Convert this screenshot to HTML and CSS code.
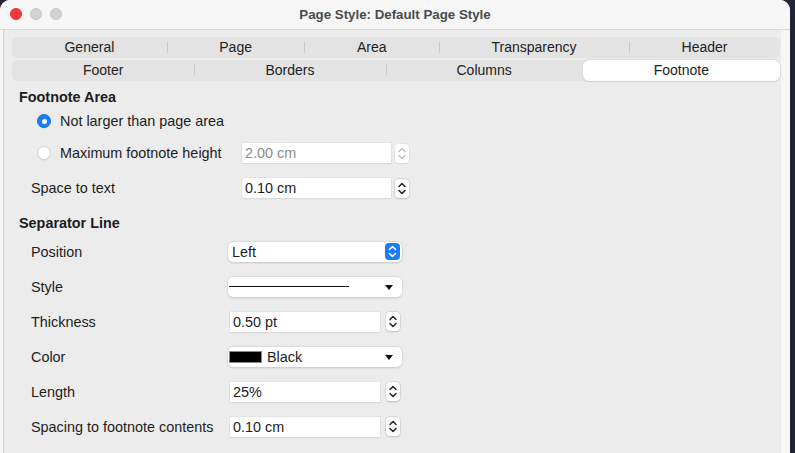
FILE: index.html
```html
<!DOCTYPE html>
<html>
<head>
<meta charset="utf-8">
<link rel="stylesheet" href="styles.css">
</head>
<body>
<div class="window">
  <div class="titlebar">
    <div class="lights">
      <span class="light red"></span>
      <span class="light gray"></span>
      <span class="light gray"></span>
    </div>
    <div class="title">Page Style: Default Page Style</div>
  </div>
  <div class="frame">
    <div class="panel">
      <div class="tabrow">
        <div class="tab">General</div>
        <div class="tab">Page</div>
        <div class="tab">Area</div>
        <div class="tab">Transparency</div>
        <div class="tab">Header</div>
      </div>
      <div class="tabrow row2">
        <div class="tab">Footer</div>
        <div class="tab">Borders</div>
        <div class="tab">Columns</div>
        <div class="tab active">Footnote</div>
      </div>

      <div class="heading h1">Footnote Area</div>
      <div class="row radio-row r1">
        <span class="radio on"></span><span class="rlabel">Not larger than page area</span>
      </div>
      <div class="row radio-row r2">
        <span class="radio"></span><span class="rlabel wide">Maximum footnote height</span>
        <div class="field f1 disabled">2.00 cm</div>
        <span class="spin disabled"><svg viewBox="0 0 14 19" width="14" height="19"><path d="M4 7.5 L7 4.5 L10 7.5" /><path d="M4 11.5 L7 14.5 L10 11.5" /></svg></span>
      </div>
      <div class="row r3">
        <span class="label l1">Space to text</span>
        <div class="field f1">0.10 cm</div>
        <span class="spin"><svg viewBox="0 0 14 19" width="14" height="19"><path d="M4 7.5 L7 4.5 L10 7.5" /><path d="M4 11.5 L7 14.5 L10 11.5" /></svg></span>
      </div>

      <div class="heading h2">Separator Line</div>
      <div class="row srow">
        <span class="label l2">Position</span>
        <div class="select">Left<span class="stepper"><svg viewBox="0 0 15 17" width="15" height="17"><path d="M4.5 6.5 L7.5 3.5 L10.5 6.5" /><path d="M4.5 10.5 L7.5 13.5 L10.5 10.5" /></svg></span></div>
      </div>
      <div class="row srow">
        <span class="label l2">Style</span>
        <div class="select"><span class="sline"></span><span class="tri"></span></div>
      </div>
      <div class="row srow">
        <span class="label l2">Thickness</span>
        <div class="field f2">0.50 pt</div>
        <span class="spin s2"><svg viewBox="0 0 14 19" width="14" height="19"><path d="M4 7.5 L7 4.5 L10 7.5" /><path d="M4 11.5 L7 14.5 L10 11.5" /></svg></span>
      </div>
      <div class="row srow">
        <span class="label l2">Color</span>
        <div class="select"><span class="swatch"></span>Black<span class="tri"></span></div>
      </div>
      <div class="row srow">
        <span class="label l2">Length</span>
        <div class="field f2">25%</div>
        <span class="spin s2"><svg viewBox="0 0 14 19" width="14" height="19"><path d="M4 7.5 L7 4.5 L10 7.5" /><path d="M4 11.5 L7 14.5 L10 11.5" /></svg></span>
      </div>
      <div class="row srow">
        <span class="label l2">Spacing to footnote contents</span>
        <div class="field f2">0.10 cm</div>
        <span class="spin s2"><svg viewBox="0 0 14 19" width="14" height="19"><path d="M4 7.5 L7 4.5 L10 7.5" /><path d="M4 11.5 L7 14.5 L10 11.5" /></svg></span>
      </div>
    </div>
  </div>
</div>
</body>
</html>
```

FILE: styles.css
```css
* { box-sizing: border-box; }
html, body { margin: 0; padding: 0; }
body {
  width: 795px;
  height: 453px;
  overflow: hidden;
  background: #1f2631;
  font-family: "Liberation Sans", Arial, sans-serif;
  font-size: 14.4px;
  color: #1c1c1c;
}
.window {
  width: 790px;
  height: 453px;
  background: #f6f6f6;
  border-radius: 10px 10px 0 0;
  overflow: hidden;
  display: flex;
  flex-direction: column;
}
.titlebar {
  height: 30px;
  flex: none;
  border-bottom: 1px solid #d9d9d9;
  display: flex;
  align-items: center;
  position: relative;
  background: #f6f6f6;
}
.lights {
  display: flex;
  gap: 8px;
  padding-left: 10px;
  padding-bottom: 1px;
}
.light {
  width: 12px;
  height: 12px;
  border-radius: 50%;
  display: block;
}
.light.red { background: #f03a3e; border: 1px solid #e0302f; }
.light.gray { background: #d3d3d3; border: 1px solid #c6c6c6; }
.title {
  position: absolute;
  left: 0; right: 0; top: 0;
  height: 29px;
  line-height: 29px;
  text-align: center;
  font-weight: bold;
  font-size: 13.3px;
  color: #4b4b4b;
}
.frame {
  flex: 1;
  padding: 0 9px 0 3px;
  display: flex;
}
.panel {
  flex: 1;
  background: #ececec;
  border-left: 1px solid #d2d2d2;
  padding: 7px 1px 0 8px;
}
.tabrow {
  display: flex;
  height: 21px;
  background: #e3e3e3;
  border-radius: 6px;
  align-items: center;
  font-size: 14px;
}
.tabrow.row2 { margin-top: 2px; }
.tab {
  flex: 1 1 auto;
  text-align: center;
  height: 21px;
  line-height: 21px;
  color: #222;
  position: relative;
}
.tab + .tab::before {
  content: "";
  position: absolute;
  left: 0;
  top: 5px;
  height: 11px;
  width: 1px;
  background: #cacaca;
}
.tab.active {
  background: #fff;
  border-radius: 6px;
  box-shadow: 0 0 0 0.5px #cfcfcf, 0 0.5px 1px rgba(0,0,0,0.12);
}
.tab.active::before, .tab.active + .tab::before { display: none; }

.heading {
  font-weight: bold;
  height: 20px;
  line-height: 20px;
  padding-left: 7px;
}
.h1 { margin-top: 6px; }
.h2 { margin-top: 8px; margin-bottom: 1px; }

.row {
  display: flex;
  align-items: center;
}
.r1 { height: 28px; }
.r2 { height: 36px; }
.r3 { height: 34px; }
.srow { height: 35px; }

.radio-row { padding-left: 25px; }
.radio {
  width: 14px;
  height: 14px;
  border-radius: 50%;
  background: #fff;
  border: 1px solid #d4d4d4;
  box-shadow: 0 0.5px 1px rgba(0,0,0,0.1);
  margin-right: 9px;
  display: flex;
  align-items: center;
  justify-content: center;
}
.radio.on {
  background: #1b7cf4;
  border-color: #1a73e4;
}
.radio.on::after {
  content: "";
  width: 5px;
  height: 5px;
  border-radius: 50%;
  background: #fff;
}
.rlabel.wide { width: 182px; }

.label { padding-left: 19px; }
.l1 { width: 230px; }
.l2 { width: 216px; }

.field {
  height: 20px;
  background: #fff;
  line-height: 20px;
  padding-left: 3px;
  box-shadow: 0 0 0 0.5px #dadada, 0 1px 1px rgba(0,0,0,0.08);
}
.f1 { width: 149px; }
.f2 { width: 150px; margin-left: 2px; }
.field.disabled { color: #8c8c8c; }

.spin {
  width: 14px;
  height: 19px;
  margin-left: 4px;
  background: #fff;
  border-radius: 4px;
  box-shadow: 0 0 0 0.5px #c9c9c9, 0 0.5px 1.5px rgba(0,0,0,0.2);
  display: block;
}
.spin.s2 { margin-left: 6px; }
.spin svg { display: block; }
.spin svg path {
  fill: none;
  stroke: #2a2a2a;
  stroke-width: 1.6;
  stroke-linecap: round;
  stroke-linejoin: round;
}
.spin.disabled { box-shadow: 0 0 0 0.5px #dedede, 0 0.5px 1px rgba(0,0,0,0.1); }
.spin.disabled svg path { stroke: #bdbdbd; stroke-width: 1.3; }

.select {
  width: 174px;
  height: 20px;
  background: #fff;
  border-radius: 5px;
  box-shadow: 0 0 0 0.5px #d4d4d4, 0 0.5px 2px rgba(0,0,0,0.18);
  display: flex;
  align-items: center;
  padding-left: 4px;
  position: relative;
}
.stepper {
  position: absolute;
  right: 2px;
  top: 1.5px;
  width: 15px;
  height: 17px;
  background: #1b7cf4;
  border-radius: 4px;
}
.stepper svg { display: block; }
.stepper svg path {
  fill: none;
  stroke: #fff;
  stroke-width: 1.5;
  stroke-linecap: round;
  stroke-linejoin: round;
}
.sline {
  width: 120px;
  height: 1px;
  background: #111;
  margin-left: -3px;
}
.tri {
  position: absolute;
  right: 9px;
  top: 8px;
  width: 0;
  height: 0;
  border-left: 4.5px solid transparent;
  border-right: 4.5px solid transparent;
  border-top: 5px solid #111;
}
.swatch {
  width: 33px;
  height: 12px;
  background: #000;
  border: 1px solid #8a8a8a;
  margin-left: -3px;
  margin-right: 5px;
}
```
